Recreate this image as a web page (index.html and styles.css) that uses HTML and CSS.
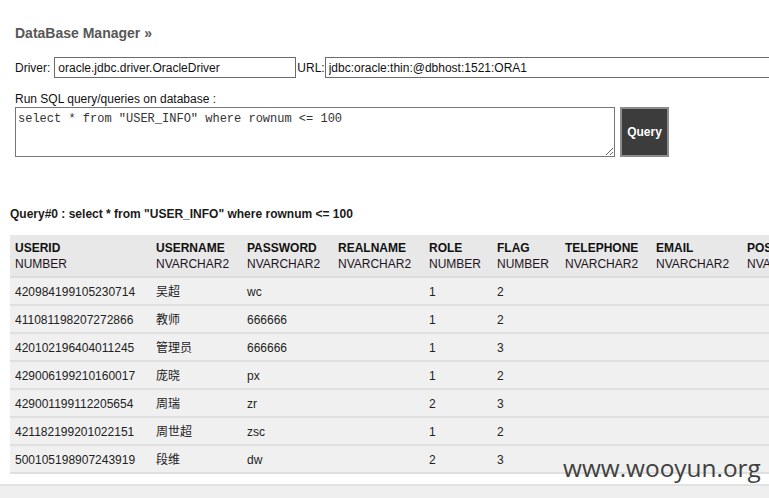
FILE: index.html
```html
<!DOCTYPE html>
<html>
<head>
<meta charset="utf-8">
<link rel="stylesheet" href="styles.css">
</head>
<body>
<div class="top">
  <h1 class="title">DataBase Manager »</h1>
  <div class="conn">
    <label class="lbl-driver">Driver:</label>
    <input class="in-driver" type="text" value="oracle.jdbc.driver.OracleDriver">
    <label class="lbl-url">URL:</label>
    <input class="in-url" type="text" value="jdbc:oracle:thin:@dbhost:1521:ORA1">
  </div>
  <div class="sql-label">Run SQL query/queries on database :</div>
  <div class="sql-row">
    <textarea class="sql">select * from "USER_INFO" where rownum &lt;= 100</textarea>
    <button class="run">Query</button>
  </div>
</div>
<div class="results">
  <div class="qtitle">Query#0 : select * from "USER_INFO" where rownum &lt;= 100</div>
  <table class="grid">
    <colgroup>
      <col class="w141"><col class="w91"><col class="w91"><col class="w91"><col class="w68"><col class="w68"><col class="w91"><col class="w91"><col class="w91">
    </colgroup>
    <thead>
      <tr>
        <th><b>USERID</b><span>NUMBER</span></th>
        <th><b>USERNAME</b><span>NVARCHAR2</span></th>
        <th><b>PASSWORD</b><span>NVARCHAR2</span></th>
        <th><b>REALNAME</b><span>NVARCHAR2</span></th>
        <th><b>ROLE</b><span>NUMBER</span></th>
        <th><b>FLAG</b><span>NUMBER</span></th>
        <th><b>TELEPHONE</b><span>NVARCHAR2</span></th>
        <th><b>EMAIL</b><span>NVARCHAR2</span></th>
        <th><b>POSITION</b><span>NVARCHAR2</span></th>
      </tr>
    </thead>
    <tbody>
      <tr><td>420984199105230714</td><td>吴超</td><td>wc</td><td></td><td>1</td><td>2</td><td></td><td></td><td></td></tr>
      <tr><td>411081198207272866</td><td>教师</td><td>666666</td><td></td><td>1</td><td>2</td><td></td><td></td><td></td></tr>
      <tr><td>420102196404011245</td><td>管理员</td><td>666666</td><td></td><td>1</td><td>3</td><td></td><td></td><td></td></tr>
      <tr><td>429006199210160017</td><td>庞晓</td><td>px</td><td></td><td>1</td><td>2</td><td></td><td></td><td></td></tr>
      <tr><td>429001199112205654</td><td>周瑞</td><td>zr</td><td></td><td>2</td><td>3</td><td></td><td></td><td></td></tr>
      <tr><td>421182199201022151</td><td>周世超</td><td>zsc</td><td></td><td>1</td><td>2</td><td></td><td></td><td></td></tr>
      <tr><td>500105198907243919</td><td>段维</td><td>dw</td><td></td><td>2</td><td>3</td><td></td><td></td><td></td></tr>
    </tbody>
  </table>
</div>
<div class="footer"></div>
<div class="watermark">www.wooyun.org</div>
</body>
</html>
```
FILE: styles.css
```css
html, body {
  margin: 0;
  padding: 0;
  overflow: hidden;
  background: #fff;
}
body {
  position: relative;
  width: 769px;
  height: 498px;
  font-family: "Liberation Sans", Arial, "Noto Sans CJK SC", sans-serif;
  font-size: 12px;
  color: #222;
}
.top {
  padding: 25px 0 0 15px;
}
.title {
  margin: 0;
  font-size: 14px;
  line-height: 16px;
  font-weight: bold;
  color: #575757;
}
.conn {
  display: flex;
  align-items: center;
  margin-top: 16px;
  height: 21px;
  white-space: nowrap;
}
.conn label {
  line-height: 14px;
  color: #111;
}
.conn input {
  box-sizing: border-box;
  height: 21px;
  border: 1px solid #6b6b6b;
  padding: 0 3px;
  margin: 0;
  font-family: "Liberation Sans", Arial, sans-serif;
  font-size: 12px;
  color: #111;
  background: #fff;
  flex: none;
}
.in-driver {
  width: 242px;
  margin-left: 4px !important;
}
.lbl-url {
  margin-left: 1px;
}
.in-url {
  width: 520px;
}
.sql-label {
  margin-top: 14px;
  line-height: 14px;
  color: #111;
}
.sql-row {
  display: flex;
  gap: 5px;
  margin-top: 1px;
  height: 50px;
}
.sql {
  box-sizing: border-box;
  width: 600px;
  height: 50px;
  margin: 0;
  border: 1px solid #777;
  padding: 4px 2px;
  font-family: "Liberation Mono", "Courier New", monospace;
  font-size: 12px;
  line-height: 14px;
  color: #333;
  resize: both;
}
.run {
  box-sizing: border-box;
  width: 49px;
  height: 50px;
  margin: 0;
  padding: 0;
  border: 2px solid #8c8c8c;
  background: #3c3c3c;
  color: #fff;
  font-family: "Liberation Sans", Arial, sans-serif;
  font-size: 12px;
  font-weight: bold;
}
.results {
  padding-left: 10px;
  margin-top: 50px;
}
.qtitle {
  font-weight: bold;
  line-height: 14px;
  color: #1a1a1a;
}
.grid {
  margin-top: 14px;
  table-layout: fixed;
  width: 823px;
  border-collapse: collapse;
  border-spacing: 0;
}
.w141 { width: 141px; }
.w91 { width: 91px; }
.w68 { width: 68px; }
.grid th {
  background: #e8e8e8;
  text-align: left;
  vertical-align: top;
  padding: 5px 5px 4px;
  line-height: 16px;
  font-weight: normal;
  border-bottom: 2px solid #dcdcdc;
  white-space: nowrap;
}
.grid th b {
  display: block;
  font-weight: bold;
  color: #111;
}
.grid th span {
  display: block;
  color: #1e141e;
}
.grid td {
  background: #f0f0f0;
  padding: 6px 5px 4px;
  line-height: 16px;
  height: 16px;
  border-bottom: 2px solid #dfdfdf;
  white-space: nowrap;
  color: #222;
}
.footer {
  margin-top: 10px;
  border-top: 2px solid #e2e2e2;
  background: #efefef;
  height: 40px;
}
.watermark {
  position: absolute;
  left: 563px;
  top: 455px;
  font-family: "Open Sans", sans-serif;
  font-size: 24.4px;
  line-height: 25px;
  color: #404040;
  white-space: nowrap;
}
```
